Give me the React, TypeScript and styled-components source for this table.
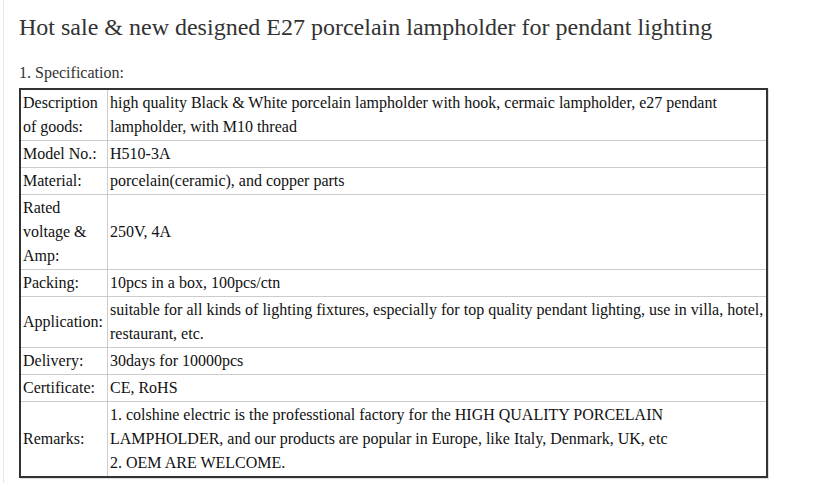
import React from 'react';
import styled, { createGlobalStyle } from 'styled-components';

const GlobalStyle = createGlobalStyle`
  body {
    margin: 0;
    background: #fff;
    font-family: "Liberation Serif", "Times New Roman", serif;
  }
`;

const specs: { label: string; value: string[] }[] = [
  {
    label: 'Description of goods:',
    value: [
      'high quality Black & White porcelain lampholder with hook, cermaic lampholder, e27 pendant lampholder, with M10 thread'
    ]
  },
  { label: 'Model No.:', value: ['H510-3A'] },
  { label: 'Material:', value: ['porcelain(ceramic), and copper parts'] },
  { label: 'Rated voltage & Amp:', value: ['250V, 4A'] },
  { label: 'Packing:', value: ['10pcs in a box, 100pcs/ctn'] },
  {
    label: 'Application:',
    value: [
      'suitable for all kinds of lighting fixtures, especially for top quality pendant lighting, use in villa, hotel, restaurant, etc.'
    ]
  },
  { label: 'Delivery:', value: ['30days for 10000pcs'] },
  { label: 'Certificate:', value: ['CE, RoHS'] },
  {
    label: 'Remarks:',
    value: [
      '1. colshine electric is the professtional factory for the HIGH QUALITY PORCELAIN LAMPHOLDER, and our products are popular in Europe, like Italy, Denmark, UK, etc',
      '2. OEM ARE WELCOME.'
    ]
  }
];

export default () => (
  <Page>
    <GlobalStyle />
    <Title>Hot sale &amp; new designed E27 porcelain lampholder for pendant lighting</Title>
    <SubTitle>1. Specification:</SubTitle>
    <SpecTable>
      <tbody>
        {specs.map(spec => (
          <tr key={spec.label}>
            <Label>{spec.label}</Label>
            <Value>
              {spec.value.map(line => (
                <div key={line}>{line}</div>
              ))}
            </Value>
          </tr>
        ))}
      </tbody>
    </SpecTable>
  </Page>
);

const Page = styled.div`
  margin-left: 3px;
  border-left: 1px solid #e6e6e6;
  min-height: 483px;
  padding: 12px 0 0 15px;
  box-sizing: border-box;
`;

const Title = styled.h1`
  margin: 0;
  font-size: 24px;
  font-weight: normal;
  line-height: 30px;
  color: #333;
`;

const SubTitle = styled.p`
  margin: 21px 0 5px;
  font-size: 16px;
  line-height: 20px;
  color: #333;
`;

const SpecTable = styled.table`
  width: 749px;
  border-collapse: collapse;
  border: 2px solid #333;
  box-shadow: 1px 1px 0 #ddd;
  font-family: "Liberation Serif", "Times New Roman", serif;
  font-size: 16px;
  line-height: 24px;
  color: #111;
`;

const Label = styled.td`
  width: 82px;
  padding: 1px 2px;
  border: 1px solid #ccc;
  vertical-align: middle;
`;

const Value = styled.td`
  padding: 1px 2px;
  border: 1px solid #ccc;
  vertical-align: middle;
`;
